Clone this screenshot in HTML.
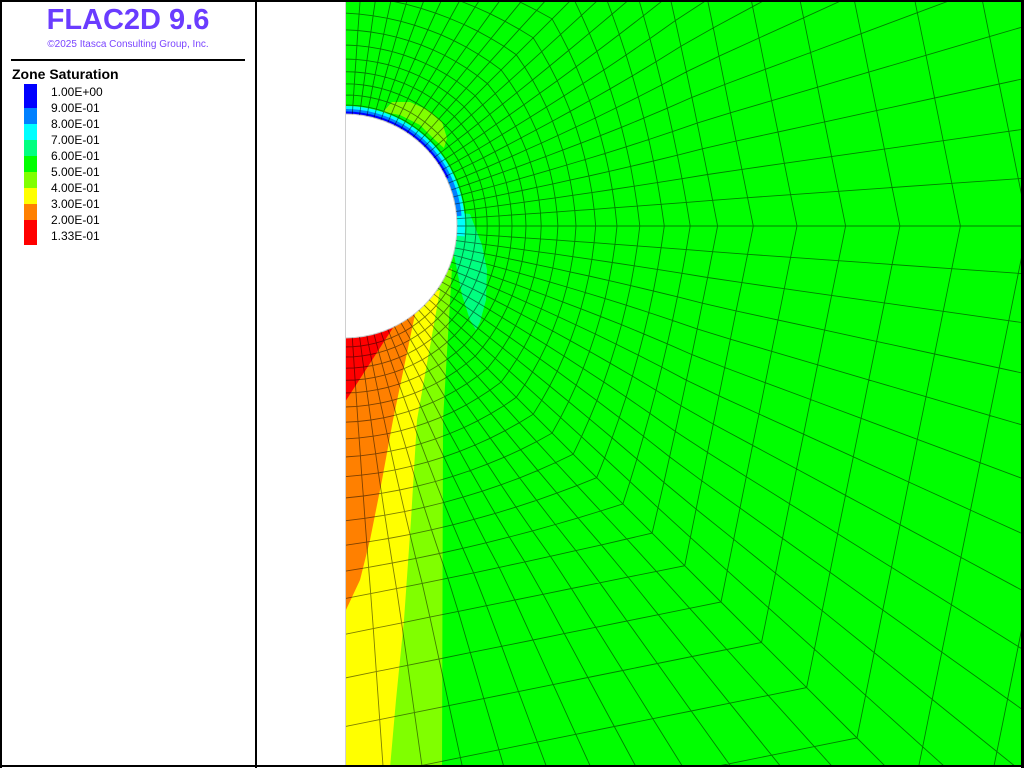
<!DOCTYPE html>
<html><head><meta charset="utf-8"><style>
html,body{margin:0;padding:0;background:#fff;overflow:hidden;width:1024px;height:768px;}
#w{position:relative;width:1024px;height:768px;overflow:hidden;font-family:"Liberation Sans","DejaVu Sans",sans-serif;}
svg{display:block}
.t{position:absolute;white-space:nowrap;}
.lab{position:absolute;left:51px;font-size:12px;color:#000;line-height:16px;}
.sw{position:absolute;left:24px;width:13px;}
</style></head><body>
<div id="w">
<svg id="s" width="1024" height="768" style="position:absolute;left:0;top:0">
<defs><clipPath id="c"><rect x="345" y="2" width="677" height="763"/></clipPath></defs>
<g clip-path="url(#c)">
<rect x="345" y="0" width="680" height="768" fill="#00ff00"/>
<polygon fill="#80ff00" points="345,330 452,268 443,420 442,768 345,768"/>
<polygon fill="#ffff00" points="345,330 440,290 417,420 411,520 404,620 396,700 390,768 345,768"/>
<polygon fill="#ff8000" points="345,330 418,300 393,420 382,480 370,540 360,580 345,612"/>
<polygon fill="#ff0000" points="345,330 398,320 345,402"/>
<polygon fill="#00ff80" points="452,212 470,214 482,245 487,270 486,300 480,322 476,330 470,320 462,295 456,265 450,235"/>
<polygon fill="#80ff00" points="383,112 392,102 410,102 428,110 442,122 447,138 444,148 435,140 420,125 400,115"/>
<g id="bands"></g>
<circle cx="345" cy="226" r="112" fill="#fff" stroke="#c8c8c8" stroke-width="1"/>
<g id="mesh" fill="none" stroke="#000" stroke-opacity="0.5" stroke-width="0.9"></g>
</g>
<rect x="257" y="0" width="88" height="768" fill="#fff"/>
<line x1="345.5" y1="2" x2="345.5" y2="765" stroke="#d0d0d0" stroke-width="1"/>
<rect x="0" y="0" width="1024" height="2" fill="#000"/>
<rect x="0" y="765" width="1024" height="2" fill="#000"/>
<rect x="0" y="0" width="2" height="768" fill="#000"/>
<rect x="255" y="0" width="2" height="768" fill="#000"/>
<rect x="1021" y="0" width="3" height="768" fill="#000"/>
<rect x="11" y="59" width="234" height="2" fill="#000"/>
</svg>
<div class="t" style="left:0;width:256px;text-align:center;top:4px;font-size:29px;font-weight:bold;color:#6a3cff;">FLAC2D 9.6</div>
<div class="t" style="left:0;width:256px;text-align:center;top:39px;font-size:10px;color:#7a44ff;">©2025 Itasca Consulting Group, Inc.</div>
<div class="t" style="left:12px;top:66px;font-size:14px;font-weight:bold;color:#000;">Zone Saturation</div>
<div class="sw" style="top:84px;height:24px;background:#0000ff"></div>
<div class="sw" style="top:108px;height:16px;background:#0080ff"></div>
<div class="sw" style="top:124px;height:16px;background:#00ffff"></div>
<div class="sw" style="top:140px;height:16px;background:#00ff80"></div>
<div class="sw" style="top:156px;height:16px;background:#00ff00"></div>
<div class="sw" style="top:172px;height:16px;background:#80ff00"></div>
<div class="sw" style="top:188px;height:16px;background:#ffff00"></div>
<div class="sw" style="top:204px;height:16px;background:#ff8000"></div>
<div class="sw" style="top:220px;height:25px;background:#ff0000"></div>
<div class="lab" style="top:84px">1.00E+00</div>
<div class="lab" style="top:100px">9.00E-01</div>
<div class="lab" style="top:116px">8.00E-01</div>
<div class="lab" style="top:132px">7.00E-01</div>
<div class="lab" style="top:148px">6.00E-01</div>
<div class="lab" style="top:164px">5.00E-01</div>
<div class="lab" style="top:180px">4.00E-01</div>
<div class="lab" style="top:196px">3.00E-01</div>
<div class="lab" style="top:212px">2.00E-01</div>
<div class="lab" style="top:228px">1.33E-01</div>
</div>
<script>
(function(){
var NS="http://www.w3.org/2000/svg",cx=345,cy=226;
function arc(r,a1,a2,col,w){
  var p="";for(var a=a1;a<=a2+0.01;a+=1){var t=a*Math.PI/180;p+=(p?"L":"M")+(cx+r*Math.cos(t)).toFixed(2)+","+(cy+r*Math.sin(t)).toFixed(2);}
  var e=document.createElementNS(NS,"path");e.setAttribute("d",p);e.setAttribute("fill","none");e.setAttribute("stroke",col);e.setAttribute("stroke-width",w);
  document.getElementById("bands").appendChild(e);
}
arc(115,-92,5,"#00ffff",10);
arc(113.5,-92,-5,"#0080ff",7);
arc(112.5,-92,-25,"#0000ff",4);
var rs=[112],r=112,dr=9;while(r<1800){r+=dr;dr*=1.115;rs.push(r);}
function pt(r,th){
  var b=Math.max(0,Math.min(1,(r-150)/300));
  var t=th*Math.PI/180;
  var x0=r*Math.cos(t),y0=r*Math.sin(t);
  var a=Math.abs(th),x1,y1,d=r/Math.SQRT2,ax=0.85*r;
  if(a<=45){var u=a/45;x1=ax+u*(d-ax);y1=u*d;}
  else{var u=(90-a)/45;x1=u*d;y1=ax+u*(d-ax);}
  if(th<0)y1=-y1;
  return [cx+(1-b)*x0+b*x1,cy+(1-b)*y0+b*y1];
}
var N=48,ths=[];for(var i=0;i<=N;i++)ths.push(-90+180*i/N);
var d="";
for(var k=1;k<rs.length;k++){for(var i=0;i<ths.length;i++){var p=pt(rs[k],ths[i]);d+=(i?"L":"M")+p[0].toFixed(1)+","+p[1].toFixed(1);}}
for(var i=0;i<ths.length;i++){for(var k=0;k<rs.length;k++){var p=pt(rs[k],ths[i]);d+=(k?"L":"M")+p[0].toFixed(1)+","+p[1].toFixed(1);}}
var e=document.createElementNS(NS,"path");e.setAttribute("d",d);document.getElementById("mesh").appendChild(e);
})();
</script>
</body></html>
